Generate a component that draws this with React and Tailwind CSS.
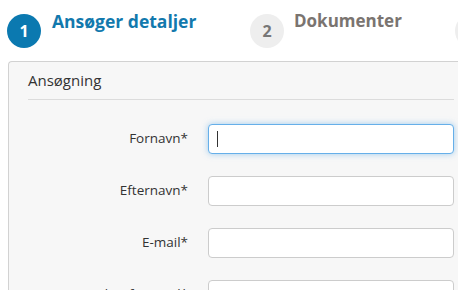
import React from 'react';

const steps = [
    { n: 1, label: 'Ansøger detaljer', active: true, width: 'w-[243px]' },
    { n: 2, label: 'Dokumenter', active: false, width: 'w-[205px]' },
    { n: 3, label: '', active: false, width: 'w-[60px]' },
];

const fields = [
    { label: 'Fornavn*', focused: true },
    { label: 'Efternavn*' },
    { label: 'E-mail*' },
    { label: 'Bekræft e-mail*' },
];

const Field = ({ label, focused }) => (
    <div className="flex items-center h-[30px] mb-[22px]">
        <label className="w-[160px] shrink-0 text-right text-[13.5px] text-[#333]">{label}</label>
        <div
            className={
                focused
                    ? 'ml-[20px] flex-1 h-[30px] bg-white rounded-[4px] border border-[#66afe9] shadow-[0_0_6px_rgba(102,175,233,0.6)] flex items-center pl-[8px]'
                    : 'ml-[20px] flex-1 h-[30px] bg-white rounded-[4px] border border-[#ccc] flex items-center pl-[8px]'
            }
        >
            {focused && <span className="w-px h-[16px] bg-[#333]" />}
        </div>
    </div>
);

const App = () => {
    return (
        <div className="w-[458px] h-[290px] overflow-hidden bg-white font-['Open_Sans',sans-serif]">
            <div className="flex h-[61px] pl-[7px] pt-[14px]">
                {steps.map(step => (
                    <div key={step.n} className={`flex items-start shrink-0 ${step.width}`}>
                        <div
                            className={
                                step.active
                                    ? 'w-[34px] h-[34px] rounded-full bg-[#0b79b0] text-white flex items-center justify-center text-[16px] font-bold'
                                    : 'w-[34px] h-[34px] rounded-full bg-[#eeeeee] text-[#777] flex items-center justify-center text-[16px] font-bold'
                            }
                        >
                            {step.n}
                        </div>
                        <span
                            className={
                                step.active
                                    ? 'ml-[11px] -mt-[6px] text-[17.5px] font-bold text-[#1279ad] whitespace-nowrap'
                                    : 'ml-[10px] -mt-[6px] text-[17px] font-bold text-[#7a7470] whitespace-nowrap'
                            }
                        >
                            {step.label}
                        </span>
                    </div>
                ))}
            </div>
            <div className="ml-[8px] w-[470px] h-[240px] bg-[#f7f7f7] border-l border-t border-[#d2d2d2] rounded-tl-[4px] pl-[19px] pr-[24px]">
                <h2 className="text-[15px] text-[#333] pt-[7px] pb-[7px] border-b border-[#dcdcdc]">Ansøgning</h2>
                <div className="pt-[24px]">
                    {fields.map(f => (
                        <Field key={f.label} label={f.label} focused={f.focused} />
                    ))}
                </div>
            </div>
        </div>
    );
};

export default App;
